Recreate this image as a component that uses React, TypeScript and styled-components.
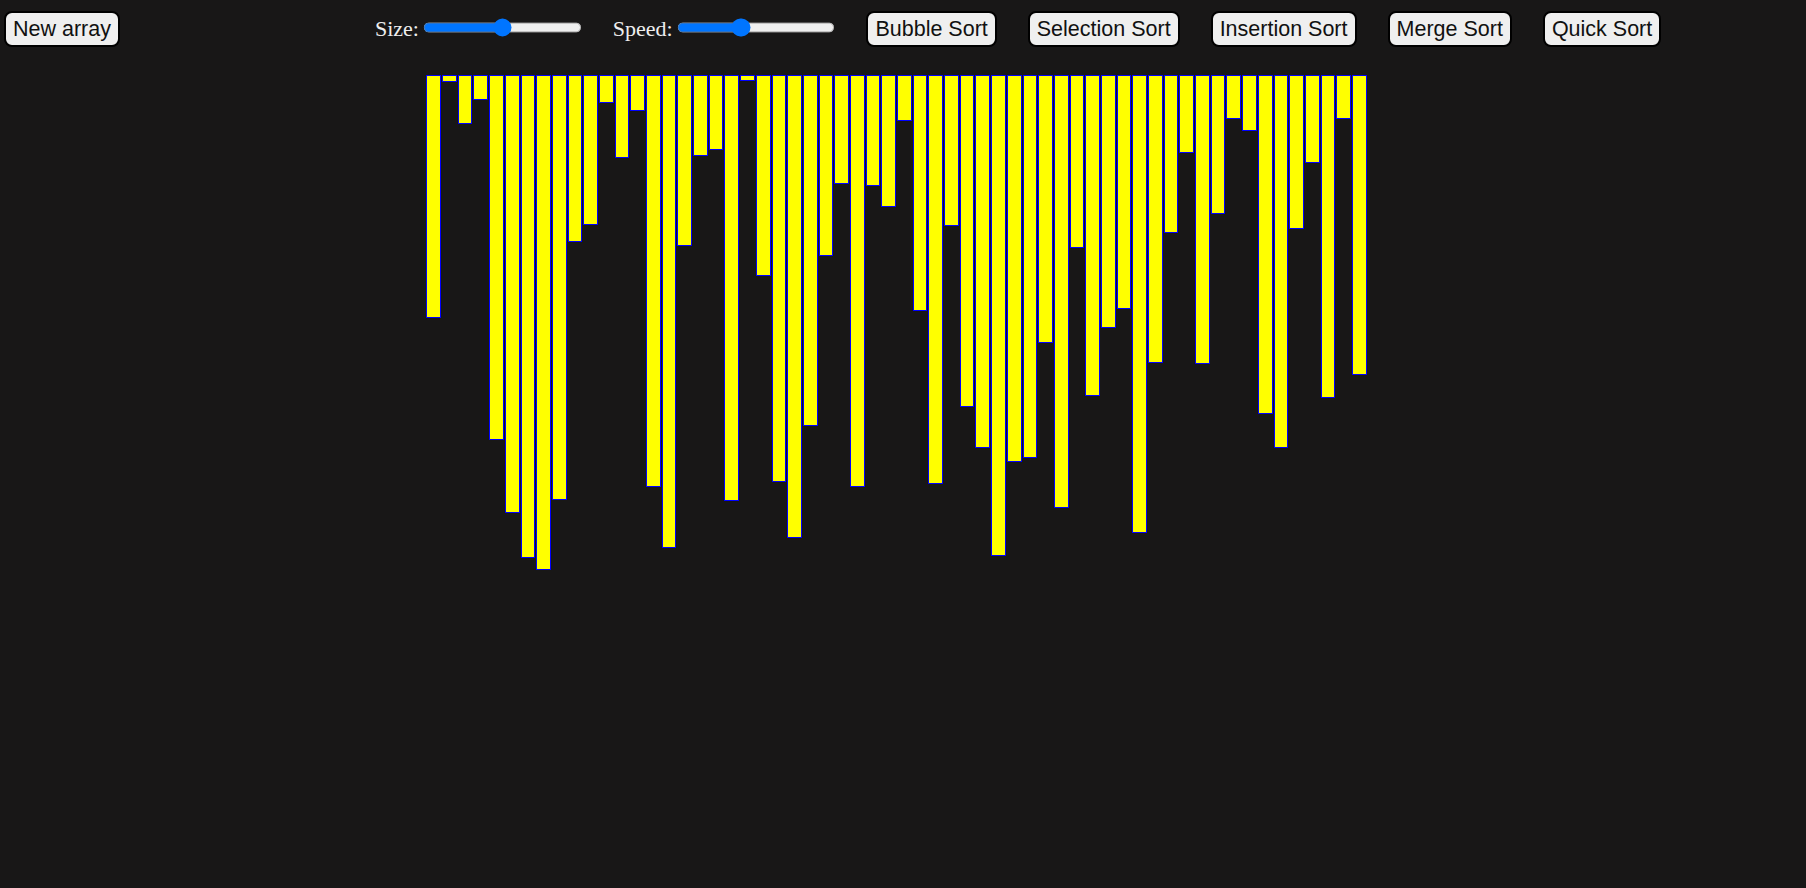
import React, { useState } from 'react';
import styled, { createGlobalStyle } from 'styled-components';

const GlobalStyle = createGlobalStyle`
  html, body {
    margin: 0;
    padding: 0;
    background-color: #181717;
  }
`;

// bar heights in px, read off the current array
const BARS = [
  243, 7, 49, 25, 365, 438, 483, 495, 425, 167, 150, 28, 83, 36, 412,
  473, 171, 81, 75, 426, 6, 201, 407, 463, 351, 181, 109, 412, 111, 132,
  46, 236, 409, 151, 332, 373, 481, 387, 383, 268, 433, 173, 321, 253, 234,
  458, 288, 158, 78, 289, 139, 44, 56, 339, 373, 154, 88, 323, 44, 300,
];

const ALGOS = ['Bubble Sort', 'Selection Sort', 'Insertion Sort', 'Merge Sort', 'Quick Sort'];

const Page = styled.div`
  min-height: 888px;
  background-color: #181717;
`;

const Toolbar = styled.nav`
  display: flex;
  align-items: center;
  padding: 11px 4px 0 4px;
  height: 36px;
`;

const Controls = styled.div`
  display: flex;
  align-items: center;
  gap: 31px;
  margin-left: 255px;
`;

const Button = styled.button`
  box-sizing: border-box;
  font-family: 'Liberation Sans', Arial, sans-serif;
  font-size: 21.5px;
  line-height: 26px;
  height: 36px;
  padding: 3px 7px;
  color: #111;
  background-color: #efefef;
  border: 2px solid #000;
  border-radius: 8px;
  cursor: pointer;

  &:hover {
    background-color: #e2e2e2;
  }
`;

const Field = styled.label`
  display: flex;
  align-items: center;
  gap: 2px;
  font-family: 'Liberation Serif', 'Times New Roman', serif;
  font-size: 22px;
  color: #eeeeee;
`;

const Slider = styled.input`
  zoom: 1.2;
  width: 132px;
  margin: 0 0 2px 2px;
  accent-color: #0075ff;
`;

const Chart = styled.div`
  display: flex;
  justify-content: center;
  align-items: flex-start;
  gap: 1px;
  padding: 27.7px 13px 0 0;
`;

const Bar = styled.div`
  box-sizing: border-box;
  width: 14.7px;
  background-color: #ffff00;
  border: 1px solid #0000ff;
`;

export default function App() {
  const [size, setSize] = useState(50);
  const [speed, setSpeed] = useState(39);

  return (
    <Page>
      <GlobalStyle />
      <Toolbar>
        <Button>New array</Button>
        <Controls>
          <Field>
            Size:
            <Slider
              type="range"
              min={0}
              max={100}
              value={size}
              onChange={(e) => setSize(Number(e.target.value))}
            />
          </Field>
          <Field>
            Speed:
            <Slider
              type="range"
              min={0}
              max={100}
              value={speed}
              onChange={(e) => setSpeed(Number(e.target.value))}
            />
          </Field>
          {ALGOS.map((name) => (
            <Button key={name}>{name}</Button>
          ))}
        </Controls>
      </Toolbar>
      <Chart>
        {BARS.map((h, i) => (
          <Bar key={i} style={{ height: h }} />
        ))}
      </Chart>
    </Page>
  );
}
